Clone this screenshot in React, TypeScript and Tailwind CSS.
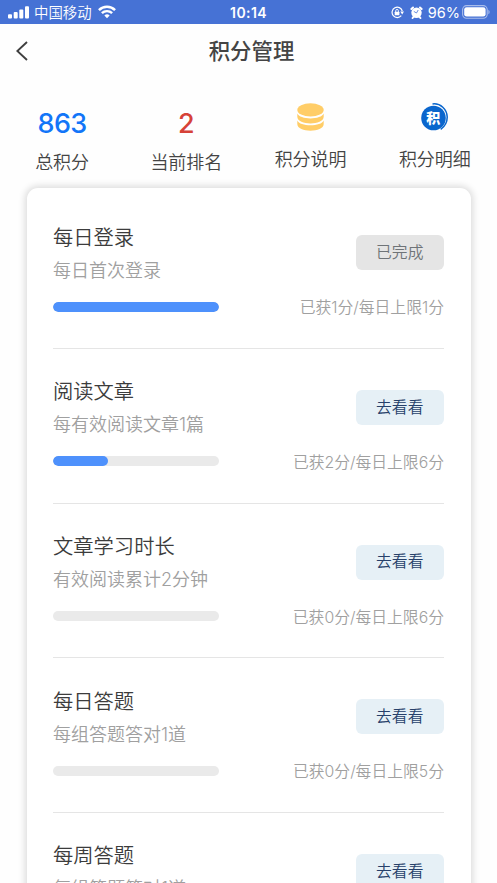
import React from 'react';

type Task = {
  title: string;
  hint: string;
  earned: number;
  limit: number;
  progress: number;
  done?: boolean;
};

const tasks: Task[] = [
  { title: '每日登录', hint: '每日首次登录', earned: 1, limit: 1, progress: 100, done: true },
  { title: '阅读文章', hint: '每有效阅读文章1篇', earned: 2, limit: 6, progress: 33.3 },
  { title: '文章学习时长', hint: '有效阅读累计2分钟', earned: 0, limit: 6, progress: 0 },
  { title: '每日答题', hint: '每组答题答对1道', earned: 0, limit: 5, progress: 0 },
  { title: '每周答题', hint: '每组答题答对1道', earned: 0, limit: 5, progress: 0 },
];

function StatusBar() {
  return (
    <header className="grid h-6 shrink-0 grid-cols-[1fr_auto_1fr] items-center bg-[#4672d5] text-white">
      <div className="flex items-center pl-2">
        <svg width="21" height="13" viewBox="0 0 21 13" fill="currentColor">
          <rect x="0" y="8.2" width="4" height="4.3" rx="1" />
          <rect x="5.7" y="6" width="4" height="6.5" rx="1" />
          <rect x="11.3" y="3.4" width="4" height="9.1" rx="1" />
          <rect x="17" y="0.2" width="4" height="12.3" rx="1" />
        </svg>
        <span className="ml-[5px] pt-[2px] text-[14.4px] leading-[22px] font-[350]">中国移动</span>
        <svg className="ml-[6px]" width="18" height="14" viewBox="0 0 19 14" fill="none" stroke="currentColor" strokeWidth="2.6">
          <path d="M1 5.1a12 12 0 0 1 17 0" />
          <path d="M4.1 8.3a7.7 7.7 0 0 1 10.8 0" />
          <path d="M9.5 13.6 6.7 10.8a4 4 0 0 1 5.6 0Z" fill="currentColor" stroke="none" />
        </svg>
      </div>
      <span className="pt-[2px] text-[14px] leading-[22px] font-semibold tracking-[0.4px]">10:14</span>
      <div className="flex items-center justify-end pr-[7px]">
        <svg width="13" height="13" viewBox="0 0 13 13" fill="none" stroke="currentColor">
          <path d="M10.3 9.7A5.2 5.2 0 1 1 11.3 5" strokeWidth="1.2" />
          <path d="m9.2 5.6 3.8-.2-1.8 3Z" fill="currentColor" stroke="none" />
          <rect x="3.7" y="5.7" width="4.7" height="3.6" rx=".5" fill="currentColor" stroke="none" />
          <path d="M4.7 6V4.8a1.35 1.35 0 0 1 2.7 0V6" strokeWidth=".9" />
        </svg>
        <svg className="ml-[6px]" width="13" height="13" viewBox="0 0 13 13">
          <circle cx="6.5" cy="6.7" r="5.2" fill="currentColor" />
          <path d="M1.4 3 3 1.5M11.6 3 10 1.5M2.6 12l1.2-1.5M10.4 12l-1.2-1.5" stroke="currentColor" strokeWidth="2" strokeLinecap="round" />
          <path d="M3.8 5.4l2.7 1.6 1.7-3" fill="none" stroke="#4672d5" strokeWidth=".8" />
        </svg>
        <span className="ml-[5px] pt-px text-[14.5px] leading-[22px] font-normal">96%</span>
        <svg className="ml-[2px]" width="28" height="14" viewBox="0 0 28 14">
          <rect x=".6" y=".6" width="24.6" height="12.6" rx="4" fill="none" stroke="#a9bdeb" strokeWidth="1.1" />
          <rect x="2.2" y="2.2" width="21.4" height="9.4" rx="2.4" fill="white" />
          <path d="M26.4 4.7c1.6.9 1.6 3.7 0 4.6Z" fill="#a9bdeb" />
        </svg>
      </div>
    </header>
  );
}

function TitleBar() {
  return (
    <div className="grid h-[55px] shrink-0 grid-cols-[1fr_auto_1fr] items-start">
      <svg className="mt-[17px] ml-4" width="12" height="20" viewBox="0 0 12 20" fill="none" stroke="#3f3f3f" strokeWidth="1.9">
        <path d="M11 1 1.3 10 11 19" />
      </svg>
      <h1 className="pl-[6px] text-[21.4px] leading-[54px] font-medium text-[#444]">积分管理</h1>
      <span />
    </div>
  );
}

function CoinsIcon() {
  return (
    <svg width="28" height="28" viewBox="0 0 28 28" fill="#ffcd67">
      <ellipse cx="13.5" cy="6.9" rx="13.2" ry="6.6" />
      <path d="M.3 10.6C2.5 17 24.5 17 26.7 10.6v3.2c0 8.8-26.4 8.8-26.4 0Z" />
      <path d="M.3 17.6c2.2 6.3 24.2 6.3 26.4 0v3.4c0 8.9-26.4 8.9-26.4 0Z" />
    </svg>
  );
}

function PointsIcon() {
  return (
    <svg width="28" height="28" viewBox="0 0 28 28">
      <circle cx="12.5" cy="15" r="12.3" fill="#0a66cd" />
      <path d="M11.5 1C19.500-.1 26.100 6.400 26.200 14c.1 5.200-2.400 9.500-6.500 12.400" fill="none" stroke="#0a66cd" strokeWidth="1.5" />
      <text x="12.3" y="19.500" textAnchor="middle" fontSize="14" fontWeight="900" fill="white">积</text>
    </svg>
  );
}

function Summary() {
  return (
    <section className="flex h-[109px] shrink-0 pt-[24px] text-[18px] leading-6 font-[350] text-[#444]">
      <div className="flex w-1/4 flex-col items-center">
        <strong className="h-[48px] text-[27px] leading-[42px] font-medium tracking-[-0.6px] text-[#1275f8]">863</strong>
        <span>总积分</span>
      </div>
      <div className="flex w-1/4 flex-col items-center">
        <strong className="h-[48px] text-[27px] leading-[42px] font-medium text-[#d64238]">2</strong>
        <span>当前排名</span>
      </div>
      <div className="flex w-1/4 flex-col items-center">
        <div className="h-[45px]"><CoinsIcon /></div>
        <span>积分说明</span>
      </div>
      <div className="flex w-1/4 flex-col items-center">
        <div className="h-[45px]"><PointsIcon /></div>
        <span>积分明细</span>
      </div>
    </section>
  );
}

function TaskRow({ task }: { task: Task }) {
  return (
    <li className="flex h-[154.67px] shrink-0 justify-between border-b border-[#e5e5e5]">
      <div className="pt-[28.5px]">
        <h2 className="text-[20.3px] leading-[30px] font-[350] text-[#3c3c3c]">{task.title}</h2>
        <p className="pt-[4px] text-[18px] leading-[28px] font-[350] text-[#a0a0a0]">{task.hint}</p>
        <div className="mt-[17px] h-[10px] w-[165.5px] overflow-hidden rounded-full bg-[#eaeaea]">
          <div className="h-full rounded-full bg-[#4e91fc]" style={{ width: `${task.progress}%` }} />
        </div>
      </div>
      <div className="flex flex-col items-end pt-[41px]">
        <button
          className={`h-[35px] w-[88.5px] rounded-[6px] text-[15.8px] font-[350] ${
            task.done ? 'bg-[#e5e5e5] text-[#6f7478]' : 'bg-[#e6f0f6] text-[#27406a]'
          }`}
        >
          {task.done ? '已完成' : '去看看'}
        </button>
        <p className="mt-[26px] text-[15.8px] leading-6 font-[350] text-[#a0a0a0]">
          已获{task.earned}分/每日上限{task.limit}分
        </p>
      </div>
    </li>
  );
}

export default function App() {
  return (
    <main className="flex h-[883px] w-full flex-col overflow-hidden bg-[#fefefe] font-['Inter','Noto_Sans_CJK_SC',sans-serif]">
      <StatusBar />
      <TitleBar />
      <Summary />
      <ul className="mx-[26.5px] flex h-[800px] shrink-0 flex-col rounded-[11px] bg-white px-[26.5px] pt-[6.3px] shadow-[0_0_7px_2px_rgba(0,0,0,0.14)]">
        {tasks.map((task) => (
          <TaskRow key={task.title} task={task} />
        ))}
      </ul>
    </main>
  );
}
